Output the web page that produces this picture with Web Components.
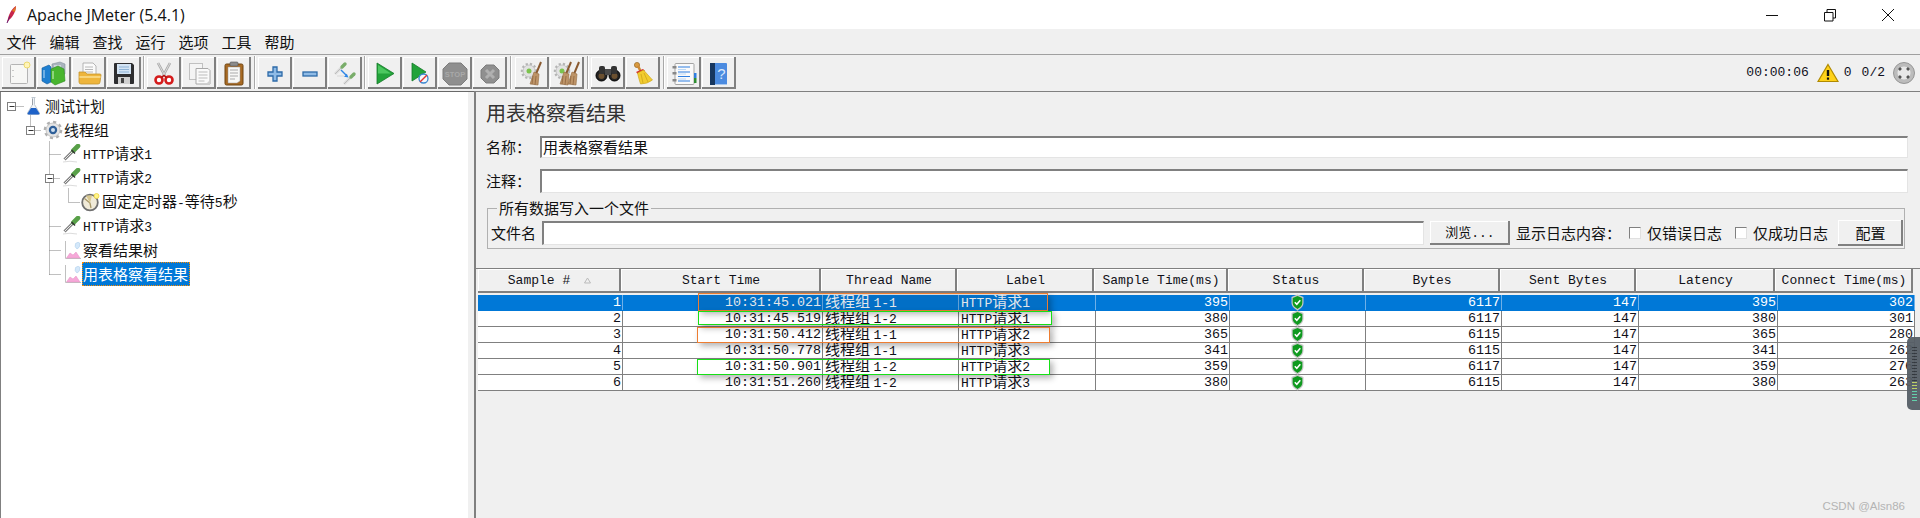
<!DOCTYPE html>
<html>
<head>
<meta charset="utf-8">
<title>Apache JMeter (5.4.1)</title>
<style>
  html, body { margin: 0; height: 100%; overflow: hidden; background: #f0f0f0; }
  body { font: 15px/20px "Noto Sans CJK SC", sans-serif; color: #111; }
</style>
</head>
<body>
<jm-app>
  <jm-titlebar>Apache JMeter (5.4.1)</jm-titlebar>
  <jm-menubar>
    <jm-menu>文件</jm-menu><jm-menu>编辑</jm-menu><jm-menu>查找</jm-menu><jm-menu>运行</jm-menu><jm-menu>选项</jm-menu><jm-menu>工具</jm-menu><jm-menu>帮助</jm-menu>
  </jm-menubar>
  <jm-toolbar></jm-toolbar>
  <jm-split>
    <jm-tree slot="left">
      <jm-node depth="0" icon="flask">测试计划</jm-node>
      <jm-node depth="1" icon="gear">线程组</jm-node>
      <jm-node depth="2" icon="pipette"><jm-l>HTTP</jm-l>请求<jm-l>1</jm-l></jm-node>
      <jm-node depth="2" icon="pipette"><jm-l>HTTP</jm-l>请求<jm-l>2</jm-l></jm-node>
      <jm-node depth="3" icon="clock">固定定时器<jm-l>-</jm-l>等待<jm-l>5</jm-l>秒</jm-node>
      <jm-node depth="2" icon="pipette"><jm-l>HTTP</jm-l>请求<jm-l>3</jm-l></jm-node>
      <jm-node depth="2" icon="graph">察看结果树</jm-node>
      <jm-node depth="2" icon="graph" selected>用表格察看结果</jm-node>
    </jm-tree>
    <jm-panel slot="right">
      <span slot="title">用表格察看结果</span>
      <jm-field label="名称：" h="22">用表格察看结果</jm-field>
      <jm-field label="注释：" h="24" style="margin-top:11px"></jm-field>
      <jm-filebox></jm-filebox>
      <jm-table></jm-table>
    </jm-panel>
  </jm-split>
  <jm-meter></jm-meter>
</jm-app>

<script>
  // latin runs in this app are a mono face, smaller than the CJK around them
  class JmL extends HTMLElement {
    constructor() {
      super();
      this.attachShadow({mode: 'open'}).innerHTML = `<style>:host{font-family:"Liberation Mono",monospace;font-size:13px}</style><slot></slot>`;
    }
  }
  customElements.define('jm-l', JmL);

  const gear = (x, y, r) => `<circle cx="${x}" cy="${y}" r="${r}" fill="none" stroke="#b4b4b4" stroke-width="2.4" stroke-dasharray="2.2 2"/><circle cx="${x}" cy="${y}" r="${r - 1}" fill="#e2e2e2" stroke="#bcbcbc" stroke-width=".8"/>`;
  const broom = (dx) => `<g transform="translate(${dx} 0)"><path d="M25 5l-5 12" stroke="#8a5a30" stroke-width="2"/><path d="M18 15l5 2-1 11-8-1z" fill="#bd9468" stroke="#94693f" stroke-width=".6"/><path d="M17 19l-1 8M20 19l-1 9" stroke="#8a5f38" stroke-width=".7"/></g>`;
  const dropper = (x, y) => `<g transform="translate(${x} ${y})"><path d="M1 12l6-6" stroke="#dedede" stroke-width="3"/><path d="M1 12l6-6" stroke="#b4b4b4" stroke-width=".8"/><path d="M8 5l3-3" stroke="#79ad6a" stroke-width="3.400" stroke-linecap="round"/></g>`;

  const TOOL_ICONS = {
    newplan: `<rect x="8.500" y="7.500" width="17" height="19" rx="1" fill="#f7f7f5" stroke="#b4b4b4"/><path d="M11 13v1M11 19v1" stroke="#999"/><circle cx="25" cy="8" r="3" fill="#fff4b8" stroke="#ecd96e"/>`,
    templates: `<path d="M15 7l8-2 5 2v10l-13 1z" fill="#a9b4bd" stroke="#84909a" stroke-width=".6"/><path d="M17 8h7v8h-7z" fill="#cdd5db"/><path d="M5 11l7-3 2 2v15l-4 2-5-3z" fill="#1f7fd0" stroke="#125a9a" stroke-width=".6"/><path d="M7 13v8" stroke="#bfe0f8"/><path d="M14 12l7-3 6 3 1 12-10 4-4-3z" fill="#49b52f" stroke="#2c8a1c" stroke-width=".6"/><path d="M16 14v8" stroke="#d6f5c8"/>`,
    open: `<path d="M11 6h10l3 3v10H11z" fill="#fbfbfb" stroke="#a4a4a4" stroke-width=".8"/><path d="M13 10h8M13 12.500h8M13 15h8" stroke="#b8b8b8"/><path d="M7 15h6l2 2h13q1 0 1 1l-1 7q0 2-2 2H9q-2 0-2-2z" fill="#eeb53c" stroke="#c4952f" stroke-width=".8"/><path d="M7.500 20h21" stroke="#f8d57c" stroke-width="2"/>`,
    save: `<path d="M7 7q0-1 1-1h17l2 2v18q0 1-1 1H8q-1 0-1-1z" fill="#2e2e30"/><rect x="10" y="7" width="14" height="10" fill="#d4e4f4"/><path d="M12 10h10M12 12.500h10M12 15h10" stroke="#8fb3d6"/><rect x="11" y="20" width="12" height="7" fill="#cfcfcf"/><rect x="14" y="21" width="3" height="5" fill="#444"/>`,
    cut: `<path d="M11 6l7 13M23 6l-7 13" stroke="#a9a9a9" stroke-width="2.600"/><path d="M11 6l7 13M23 6l-7 13" stroke="#e6e6e6" stroke-width=".8"/><circle cx="12" cy="23" r="3.500" fill="#fff" stroke="#d41c1c" stroke-width="2.600"/><circle cx="22" cy="23" r="3.500" fill="#fff" stroke="#d41c1c" stroke-width="2.600"/><path d="M14.500 20.500l2.500-2 2.500 2" stroke="#b01010" stroke-width="1.600" fill="none"/>`,
    copy: `<rect x="7.500" y="6.500" width="13" height="16" fill="#f4f4f4" stroke="#c0c0c0"/><path d="M14 11.500h12l2 2V27H14z" fill="#fafafa" stroke="#a8a8a8"/><path d="M16.500 15h9M16.500 18h9M16.500 21h9M16.500 24h6" stroke="#bcbcbc"/><path d="M24 27l4-4v4z" fill="#cfcfcf"/>`,
    paste: `<rect x="8" y="7" width="18" height="21" rx="1.500" fill="#a86a23" stroke="#6f4512"/><path d="M11 10h12v14l-3 2h-9z" fill="#f8f8f6" stroke="#999" stroke-width=".5"/><rect x="13" y="5" width="8" height="4" rx="1" fill="#8b8b8b" stroke="#555" stroke-width=".6"/><path d="M13 13h8M13 16h8M13 19h8M13 22h5" stroke="#aaa"/>`,
    plus: `<path d="M15 10h4v5h5v4h-5v5h-4v-5h-5v-4h5z" fill="#8fbbe6" stroke="#2d6aa8" stroke-width="1.300"/>`,
    minus: `<rect x="10" y="15" width="14" height="4" fill="#8fbbe6" stroke="#2d6aa8" stroke-width="1.300"/>`,
    toggle: `${dropper(6, 5)}${dropper(15, 15)}<path d="M9 19h7" stroke="#dcdcdc" stroke-width="1.200"/><path d="M13 13l5 5" stroke="#2f86e6" stroke-width="1.400"/><path d="M20.500 20.500l-4.500-.8 2.800-3z" fill="#2f86e6"/>`,
    start: `<path d="M9 6l17 10.500L9 27z" fill="#22a33a" stroke="#157a28" stroke-width=".8"/><path d="M10 8l13 8.500H10z" fill="#4cc860"/>`,
    notimers: `<path d="M9 6l14 9-14 9z" fill="#22a33a" stroke="#157a28" stroke-width=".8"/><circle cx="20.500" cy="21.500" r="4.500" fill="#f4f8fc" stroke="#3a86d0" stroke-width="1.300"/><path d="M17 25l7-7" stroke="#e03434" stroke-width="1.400"/>`,
    stop: `<path d="M11 6h12l6 6v10l-6 6H11l-6-6V12z" fill="#8f8f8f" stroke="#7d7d7d"/><text x="17" y="20" text-anchor="middle" font-family="Liberation Sans" font-weight="700" font-size="7.500" fill="#a9a9a9">STOP</text>`,
    shutdown: `<path d="M13 8h8l5 5v8l-5 5h-8l-5-5v-8z" fill="#8f8f8f" stroke="#7d7d7d"/><path d="M13 13l8 8M21 13l-8 8" stroke="#b0b0b0" stroke-width="3"/>`,
    clear: `${gear(14, 14, 7)}<circle cx="14" cy="14" r="2.500" fill="#7cc34e"/>${broom(1)}`,
    clearall: `${gear(12, 14, 7)}<circle cx="12" cy="14" r="2.500" fill="#7cc34e"/>${broom(-4)}${broom(4)}`,
    search: `<circle cx="10.500" cy="18.500" r="5.500" fill="#222" stroke="#000"/><circle cx="23.500" cy="18.500" r="5.500" fill="#222" stroke="#000"/><circle cx="10.500" cy="19" r="3" fill="#6b5030"/><circle cx="23.500" cy="19" r="3" fill="#6b5030"/><rect x="8" y="9" width="6" height="8" rx="2" fill="#333"/><rect x="20" y="9" width="6" height="8" rx="2" fill="#333"/><rect x="14" y="12" width="6" height="6" fill="#4a4a4a"/>`,
    clearglobal: `<circle cx="11" cy="8" r="2.600" fill="#d99a40" stroke="#9b6a22" stroke-width=".7"/><path d="M12 9l3 6" stroke="#cf8a34" stroke-width="2.600"/><path d="M10 15l7-3 2 2-7 3z" fill="#d8262c"/><path d="M11.500 16l6-3 9 10q-5 4-12 4-2-6-3-11z" fill="#f2cc30" stroke="#c7a117" stroke-width=".6"/><path d="M15 17l2 9M18 16l4 9" stroke="#c7a117" stroke-width=".7"/>`,
    list: `<rect x="8" y="6.500" width="19" height="21" rx="1" fill="#fafafa" stroke="#a4a4a4"/><path d="M11 10h12M11 15h12M11 19.500h12M11 24h12" stroke="#2f7fe0" stroke-width="1.200"/><path d="M11 12.500h8M11 17h8M11 22h8" stroke="#bcd8f4"/><rect x="5.500" y="9" width="4" height="2.500" fill="#888"/><rect x="5.500" y="15" width="4" height="2.500" fill="#888"/><rect x="5.500" y="22" width="4" height="2.500" fill="#888"/><rect x="27" y="16" width="2.500" height="5" fill="#2f7fe0"/><rect x="27" y="21" width="2.500" height="5" fill="#2e8f30"/>`,
    help: `<rect x="8" y="6" width="17" height="22" rx="1" fill="#4b8be0"/><rect x="8" y="6" width="5" height="22" fill="#17375f"/><path d="M13 27.500h12" stroke="#a9c8ee"/><text x="19.500" y="22" text-anchor="middle" font-family="Liberation Sans" font-size="15" fill="#d8e8fb">?</text>`
  };

  const NODE_ICONS = {
    flask: `<path d="M7.500 1.500h4M8.500 2v6.500L3.500 17q-.5 1.500 1 1.500h10q1.500 0 1-1.500l-5-8.500V2" fill="#f0f4f8" stroke="#c0c8d0"/><path d="M7 12h5l3.500 5.500q0 1-1 1h-10q-1 0-1-1z" fill="#1e62c8"/><path d="M8.500 3v6" stroke="#9aa0a8"/>`,
    gear: `<circle cx="10" cy="10" r="7.800" fill="none" stroke="#b0b0b0" stroke-width="3" stroke-dasharray="3 3.100"/><circle cx="10" cy="10" r="7" fill="#e4e4e4" stroke="#bcbcbc" stroke-width=".8"/><circle cx="10" cy="10" r="4.200" fill="#2f5f98"/><circle cx="10" cy="10" r="2" fill="#cfe0f0"/>`,
    pipette: `<path d="M1 18q7-1.500 14 0" stroke="#dcdcdc" fill="none"/><path d="M2.500 15.500l8-8" stroke="#808080" stroke-width="3"/><path d="M2.500 15.500l8-8" stroke="#e8e8e8" stroke-width="1"/><path d="M11.500 6.500L16 2" stroke="#58a048" stroke-width="4.600" stroke-linecap="round"/><path d="M9.500 6l3.500 3.500" stroke="#333" stroke-width="1.400"/>`,
    clock: `<circle cx="9" cy="10.500" r="7.800" fill="#f0ead8" stroke="#707070" stroke-width="1.800"/><path d="M3.500 6.500l5.500 4.500 1 5" stroke="#a89868" stroke-width="1.300" fill="none"/><path d="M9 11L5 3.500h6z" fill="#d8c890"/><circle cx="15.500" cy="4" r="2.500" fill="#fff48a" stroke="#ecd23c" stroke-width=".8"/>`,
    graph: `<path d="M3.500 1v17.500H19" stroke="#c0c0c0" fill="none"/><path d="M4.500 18l3.500-5 3 2 3-3 4 6z" fill="#f6a8d8" stroke="#e490c4" stroke-width=".5"/><path d="M13.500 3.500q3-2.500 4.500 0 0 4.500-3 5.500-3-2-1.500-5.500z" fill="#d4e8fa" stroke="#a8cae8" stroke-width=".5"/>`
  };

  class JmApp extends HTMLElement {
    constructor() {
      super();
      this.attachShadow({mode: 'open'}).innerHTML = `
        <style>:host{display:flex;flex-direction:column;height:100vh;position:relative;overflow:hidden}</style>
        <slot></slot>`;
    }
  }
  customElements.define('jm-app', JmApp);

  class JmTitlebar extends HTMLElement {
    constructor() {
      super();
      this.attachShadow({mode: 'open'}).innerHTML = `
        <style>
          :host{display:flex;align-items:center;height:29px;flex:none;background:#fff;font:16px "Open Sans",sans-serif;color:#111}
          .feather{margin:0 10px 0 6px}
          .txt{flex:1}
          .ctl{width:58px;display:flex;justify-content:center}
          .ctl svg{display:block}
          .ctls{display:flex;padding-right:3px}
        </style>
        <svg class="feather" width="11" height="19" viewBox="0 0 11 19"><path d="M1 18C2 11 5 4 10 1 10 6 7 12 3 15z" fill="#c8264a"/><path d="M6 6l4-5-1 6z" fill="#e07a20"/><path d="M1 18l3-7" stroke="#6a1a70" stroke-width="1"/></svg>
        <span class="txt"><slot></slot></span>
        <div class="ctls">
          <div class="ctl"><svg width="14" height="14"><path d="M1 7.500h12" stroke="#111"/></svg></div>
          <div class="ctl"><svg width="14" height="14"><path d="M1.500 4.500h8.500v8.500H1.500zM4 4.500V1.500h8.500v8.500H10" fill="none" stroke="#111"/></svg></div>
          <div class="ctl"><svg width="14" height="14"><path d="M1 1l12 12M13 1L1 13" stroke="#111"/></svg></div>
        </div>`;
    }
  }
  customElements.define('jm-titlebar', JmTitlebar);

  class JmMenubar extends HTMLElement {
    constructor() {
      super();
      this.attachShadow({mode: 'open'}).innerHTML = `
        <style>:host{display:flex;flex:none;height:25px;align-items:center;background:#f0f0f0;border-bottom:1px solid #a0a0a0}</style>
        <slot></slot>`;
    }
  }
  customElements.define('jm-menubar', JmMenubar);

  class JmMenu extends HTMLElement {
    constructor() {
      super();
      this.attachShadow({mode: 'open'}).innerHTML = `
        <style>:host{display:block;padding:0 6.500px;line-height:25px}</style>
        <slot></slot>`;
    }
  }
  customElements.define('jm-menu', JmMenu);

  class JmTool extends HTMLElement {
    constructor() {
      super();
      const icon = TOOL_ICONS[this.getAttribute('icon')];
      this.attachShadow({mode: 'open'}).innerHTML = `
        <style>
          :host{display:block;width:34px;height:32px;box-sizing:border-box;background:#f0f0f0;overflow:hidden;
            box-shadow:inset -2px -2px 0 #808080, inset 1px 1px 0 #fff}
          svg{display:block}
        </style>
        <svg width="34" height="32" viewBox="0 0 34 32" fill="none">${icon}</svg>`;
    }
  }
  customElements.define('jm-tool', JmTool);

  class JmToolSep extends HTMLElement {
    constructor() {
      super();
      this.attachShadow({mode: 'open'}).innerHTML = `
        <style>
          :host{display:flex;justify-content:center;align-self:stretch;flex:none}
          i{display:block;width:1px;background:#a8a8a8;border-right:1px solid #fff}
        </style><i></i>`;
      this.style.width = this.getAttribute('w') + 'px';
    }
  }
  customElements.define('jm-sep', JmToolSep);

  class JmToolbar extends HTMLElement {
    constructor() {
      super();
      const groups = [
        [['newplan', 'templates', 'open', 'save'], 4],
        [['cut', 'copy', 'paste'], 5],
        [['plus', 'minus', 'toggle'], 4],
        [['start', 'notimers', 'stop', 'shutdown'], 6],
        [['clear', 'clearall'], 5],
        [['search', 'clearglobal'], 5],
        [['list', 'help'], 0]
      ];
      const tools = groups.map(([names, sep]) =>
        names.map(n => `<jm-tool icon="${n}"></jm-tool>`).join('') + (sep ? `<jm-sep w="${sep}"></jm-sep>` : '')).join('');
      this.attachShadow({mode: 'open'}).innerHTML = `
        <style>
          :host{display:flex;align-items:center;gap:1px;flex:none;padding:1px 0 2px 2px;box-sizing:border-box;background:#f0f0f0;border-bottom:1px solid #696969;height:37px}
          .status{margin-left:auto;display:flex;align-items:center;font:13px "Liberation Mono",monospace;color:#112;padding-right:5px}
          svg{display:block;flex:none}
        </style>
        ${tools}
        <div class="status">
          <span>00:00:06</span>
          <svg style="margin-left:8px" width="22" height="20" viewBox="0 0 22 20"><path d="M11 1.500L21 18.500H1z" fill="#ffd21a" stroke="#b08a00" stroke-width="1.200"/><path d="M11 7v6" stroke="#111" stroke-width="2.400"/><path d="M11 14.500v2.200" stroke="#111" stroke-width="2.200"/></svg>
          <span style="margin-left:5px">0</span>
          <span style="margin-left:10px">0/2</span>
          <svg style="margin-left:8px" width="22" height="22" viewBox="0 0 22 22"><circle cx="11" cy="11" r="10.500" fill="#bcbcbc" stroke="#959595"/><circle cx="11" cy="11" r="6.500" fill="#e8e8e8"/><path d="M6 8l2-2M14 6l2 2M16 14l-2 2M8 16l-2-2" stroke="#555" stroke-width="2.600"/></svg>
        </div>`;
    }
  }
  customElements.define('jm-toolbar', JmToolbar);

  class JmSplit extends HTMLElement {
    constructor() {
      super();
      this.attachShadow({mode: 'open'}).innerHTML = `
        <style>
          :host{display:flex;flex:1;min-height:0}
          ::slotted([slot=left]){width:468px;flex:none}
          ::slotted([slot=right]){flex:1;margin-left:6px;min-width:0}
        </style>
        <slot name="left"></slot><slot name="right"></slot>`;
    }
  }
  customElements.define('jm-split', JmSplit);

  class JmTree extends HTMLElement {
    constructor() {
      super();
      // handles and dotted guides sit over the rows, y is relative to the tree's top edge (y=92)
      const v = (x, a, b) => `<path d="M${x} ${a}V${b}"/>`;
      const h = (y, a, b) => `<path d="M${a} ${y}H${b}"/>`;
      const box = (x, y) => `<rect x="${x - 4}" y="${y - 4}" width="8" height="8" fill="#fff" stroke="#808080" stroke-dasharray="none"/><path d="M${x - 2} ${y}h5" stroke="#333" stroke-dasharray="none"/>`;
      this.attachShadow({mode: 'open'}).innerHTML = `
        <style>
          :host{display:block;position:relative;background:#fff;padding-top:2px;box-sizing:border-box;border-left:1px solid #808080}
          svg{position:absolute;left:-1px;top:0;pointer-events:none}
        </style>
        <slot></slot>
        <svg width="120" height="200" fill="none" stroke="#808080" stroke-dasharray="1 1">
          <g transform="translate(.5 .5)">
            ${h(14, 16, 24)}${v(30, 23, 34)}${h(38, 35, 41)}
            ${v(49, 49, 182)}${h(62, 49, 60)}${h(86, 54, 60)}${h(134, 49, 60)}${h(158, 49, 60)}${h(182, 49, 60)}
            ${v(68, 96, 110)}${h(110, 68, 80)}
            ${box(11, 14)}${box(30, 38)}${box(49, 86)}
          </g>
        </svg>`;
    }
  }
  customElements.define('jm-tree', JmTree);

  class JmNode extends HTMLElement {
    constructor() {
      super();
      const d = +this.getAttribute('depth');
      const sel = this.hasAttribute('selected');
      this.attachShadow({mode: 'open'}).innerHTML = `
        <style>
          :host{display:flex;align-items:center;height:24px;line-height:24px;padding-left:${23 + 19 * d}px}
          svg{display:block;flex:none}
          .t{padding:0 1px;${sel ? 'background:#0078d7;color:#fff;padding:0 2px 0 1px;outline:1px dotted #ff8c00;outline-offset:-1px;' : ''}}
        </style>
        <svg width="20" height="20" viewBox="0 0 20 20" fill="none">${NODE_ICONS[this.getAttribute('icon')]}</svg>
        <span class="t"><slot></slot></span>`;
    }
  }
  customElements.define('jm-node', JmNode);

  class JmPanel extends HTMLElement {
    constructor() {
      super();
      this.attachShadow({mode: 'open'}).innerHTML = `
        <style>
          :host{display:flex;flex-direction:column;position:relative;box-sizing:border-box;border-left:2px solid #808080;border-top:1px solid #808080;background:#f0f0f0;margin-top:-1px}
          .title{font-size:20px;line-height:28px;padding:7px 0 0 10px;color:#333;margin-bottom:9px}
          .mark{position:absolute;right:15px;bottom:6px;font:11.500px "Liberation Sans",sans-serif;color:#b4b4b4}
        </style>
        <div class="title"><slot name="title"></slot></div>
        <slot></slot>
        <div class="mark">CSDN @Alsn86</div>`;
    }
  }
  customElements.define('jm-panel', JmPanel);

  class JmField extends HTMLElement {
    constructor() {
      super();
      this.attachShadow({mode: 'open'}).innerHTML = `
        <style>
          :host{display:flex;align-items:center;padding:0 12px 0 10px}
          label{width:54px;flex:none;padding-bottom:1px}
          jm-input{flex:1;height:${this.getAttribute('h')}px}
        </style>
        <label>${this.getAttribute('label')}</label>
        <jm-input><slot></slot></jm-input>`;
    }
  }

  class JmInput extends HTMLElement {
    constructor() {
      super();
      this.attachShadow({mode: 'open'}).innerHTML = `
        <style>
          :host{display:block;box-sizing:border-box;background:#fff;border:1px solid #e4e4e4;border-top:2px solid #808080;border-left:2px solid #808080;padding-left:1px;line-height:18px;white-space:nowrap;overflow:hidden}
        </style>
        <slot></slot>`;
    }
  }
  customElements.define('jm-input', JmInput);
  customElements.define('jm-field', JmField);

  class JmButton extends HTMLElement {
    constructor() {
      super();
      this.attachShadow({mode: 'open'}).innerHTML = `
        <style>
          :host{display:flex;align-items:center;justify-content:center;flex:none;box-sizing:border-box;background:#f0f0f0;
            box-shadow:inset -2px -2px 0 #808080, inset 1px 1px 0 #fff}
        </style>
        <slot></slot>`;
    }
  }
  customElements.define('jm-button', JmButton);

  class JmCheck extends HTMLElement {
    constructor() {
      super();
      this.attachShadow({mode: 'open'}).innerHTML = `
        <style>
          :host{display:flex;align-items:center;flex:none}
          i{display:block;width:12px;height:12px;box-sizing:border-box;background:#fff;border:1px solid #808080;border-right-color:#e0e0e0;border-bottom-color:#e0e0e0;margin-right:6px}
        </style>
        <i></i><slot></slot>`;
    }
  }
  customElements.define('jm-check', JmCheck);

  class JmFilebox extends HTMLElement {
    constructor() {
      super();
      this.attachShadow({mode: 'open'}).innerHTML = `
        <style>
          :host{display:block;flex:none;margin:5px 15px 0 11px}
          fieldset{margin:0;border:1px solid #b0b0b0;padding:2px 1px 2px 3px}
          legend{margin-left:6px;padding:0 2px;line-height:20px;font-size:15px}
          .row{display:flex;align-items:center;height:26px}
          .fn{width:51px;flex:none}
          jm-input{flex:1;height:24px}
          .browse{width:80px;height:24px;margin:0 6px 0 6px}
          .browse span{font-size:13px}
          .show{width:113px;flex:none;white-space:nowrap}
          .c2{margin-left:13px}
          .cfg{width:65px;height:26px;margin-left:10px}
        </style>
        <fieldset>
          <legend>所有数据写入一个文件</legend>
          <div class="row">
            <span class="fn">文件名</span>
            <jm-input></jm-input>
            <jm-button class="browse"><span>浏览<jm-l>...</jm-l></span></jm-button>
            <span class="show">显示日志内容：</span>
            <jm-check>仅错误日志</jm-check>
            <jm-check class="c2">仅成功日志</jm-check>
            <jm-button class="cfg">配置</jm-button>
          </div>
        </fieldset>`;
    }
  }
  customElements.define('jm-filebox', JmFilebox);

  const RESULTS = [
    [1, '10:31:45.021', '1-1', 1, 395, 6117, 147, 395, 302],
    [2, '10:31:45.519', '1-2', 1, 380, 6117, 147, 380, 301],
    [3, '10:31:50.412', '1-1', 2, 365, 6115, 147, 365, 280],
    [4, '10:31:50.778', '1-1', 3, 341, 6115, 147, 341, 262],
    [5, '10:31:50.901', '1-2', 2, 359, 6117, 147, 359, 276],
    [6, '10:31:51.260', '1-2', 3, 380, 6115, 147, 380, 263]
  ];
  const HEADERS = ['Sample #', 'Start Time', 'Thread Name', 'Label', 'Sample Time(ms)', 'Status', 'Bytes', 'Sent Bytes', 'Latency', 'Connect Time(ms)'];
  const SHIELD = `<svg width="13" height="17" viewBox="0 0 13 17"><path d="M6.500 .5l6 2.500v6q0 4-6 7.500-6-3.500-6-7.500V3z" fill="#c8c8c8"/><path d="M6.500 2l4.800 2v5q0 3.300-4.800 6-4.800-2.700-4.800-6V4z" fill="#0f9a1f"/><path d="M3.800 8.300l2 2 3.500-4" fill="none" stroke="#fff" stroke-width="1.500"/></svg>`;

  class JmTable extends HTMLElement {
    constructor() {
      super();
      const num = v => `<div class="c r">${v}</div>`;
      const rows = RESULTS.map((r, i) => `
        <div class="row${i === 0 ? ' sel' : ''}">
          ${num(r[0])}${num(r[1])}
          <div class="c">线程组 <jm-l>${r[2]}</jm-l></div>
          <div class="c"><jm-l>HTTP</jm-l>请求<jm-l>${r[3]}</jm-l></div>
          ${num(r[4])}
          <div class="c m">${SHIELD}</div>
          ${num(r[5])}${num(r[6])}${num(r[7])}${num(r[8])}
        </div>`).join('');
      const sort = `<svg style="margin-left:14px" width="7" height="7"><path d="M3.500 1L6.500 6H.5z" fill="none" stroke="#bbb"/></svg>`;
      this.attachShadow({mode: 'open'}).innerHTML = `
        <style>
          :host{display:block;flex:1;position:relative;margin-top:19px;border-top:1px solid #808080;padding-left:1px;font:13px "Liberation Mono",monospace;color:#101018}
          .head{display:grid;grid-template-columns:143px 200px 136px 137px 134px 136px 136px 136px 139px 138px;height:24px;margin:0 0 2px 1px}
          .head div{display:flex;align-items:center;justify-content:center;box-sizing:border-box;box-shadow:inset -2px -2px 0 #808080, inset 1px 1px 0 #fff;padding-bottom:1px;white-space:nowrap}
          .rows{margin-left:1px;width:1437px}
          .row{display:grid;grid-template-columns:145px 200px 136px 137px 134px 136px 136px 137px 139px 137px;height:16px;box-sizing:border-box;border-bottom:1px solid #808080;background:#fff}
          /* tight line-height keeps the tall CJK face on the same baseline as the number cells */
          .c{box-sizing:border-box;border-right:1px solid #808080;padding:0 2px;white-space:nowrap;font-family:"Noto Sans CJK SC",sans-serif;font-size:15px;line-height:11px;height:15px}
          .r{text-align:right;padding:0 1px 0 0;font:13.350px/15px "Liberation Mono",monospace}
          .m{display:flex;justify-content:center;align-items:center;position:relative}
          .m svg{position:absolute;top:-1px;left:calc(50% - 7px)}
          .row.sel{background:#0078d7;color:#fff;border-bottom-color:#0078d7}
          .row.sel .c{border-right-color:#6fb0e8}
          .box{position:absolute;box-sizing:border-box;border:1.500px solid;box-shadow:3px 3px 6px rgba(0,0,0,.3)}
          .o{border-color:#ed7d31}
          .g{border-color:#16e016}
        </style>
        <div class="head">
          <div>Sample #${sort}</div>${HEADERS.slice(1).map(h => `<div>${h}</div>`).join('')}
        </div>
        <div class="rows">${rows}</div>
        <div class="box o" style="left:222px;top:24px;width:350px;height:18px;background:rgba(20,50,80,.12)"></div>
        <div class="box g" style="left:222px;top:42px;width:354px;height:14px"></div>
        <div class="box o" style="left:221px;top:58px;width:353px;height:16px"></div>
        <div class="box g" style="left:221px;top:90px;width:353px;height:16px"></div>`;
    }
  }
  customElements.define('jm-table', JmTable);

  // floating meter widget of a desktop tool, lying over the right edge of the table
  class JmMeter extends HTMLElement {
    constructor() {
      super();
      this.attachShadow({mode: 'open'}).innerHTML = `
        <style>
          :host{position:absolute;right:0;top:337px;width:13px;height:73px;background:#565e66;border-radius:5px 0 0 5px;opacity:.95}
          i{position:absolute;left:5px;width:5px;display:block}
          .off{top:10px;height:35px;background:repeating-linear-gradient(#2e343a 0 1px,#565e66 1px 3px)}
          .on{top:45px;height:20px;background:repeating-linear-gradient(#bcd060 0 1px,#565e66 1px 3px);}
          .lo{top:54px;height:11px;background:repeating-linear-gradient(#5cd0a8 0 1px,#565e66 1px 3px)}
        </style>
        <i class="off"></i><i class="on"></i><i class="lo"></i>`;
    }
  }
  customElements.define('jm-meter', JmMeter);
</script>
</body>
</html>
